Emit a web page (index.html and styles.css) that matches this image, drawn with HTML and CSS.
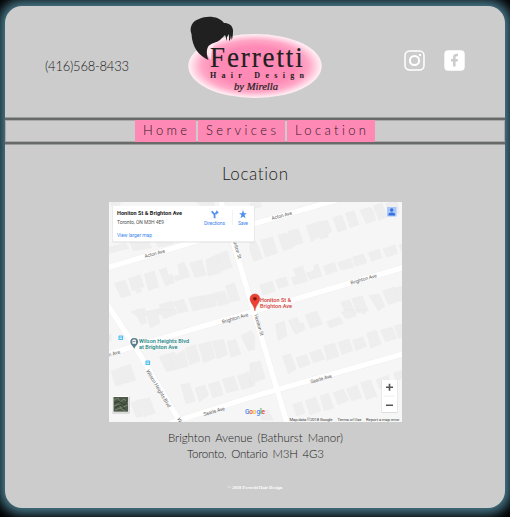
FILE: index.html
```html
<!DOCTYPE html>
<html lang="en">
<head>
<meta charset="utf-8">
<title>Ferretti Hair Design - Location</title>
<link rel="stylesheet" href="styles.css">
</head>
<body>
<div class="panel">
  <header class="header">
    <div class="phone"><svg width="86" height="22"><text x="1" y="15" textLength="84">(416)568-8433</text></svg></div>
    <svg class="logo" width="136" height="86" viewBox="187 14 136 86">
      <defs><radialGradient id="glow"><stop offset=".6" stop-color="#ff8ab5"/><stop offset=".8" stop-color="#ffa6c6"/><stop offset=".94" stop-color="#ffdce8"/><stop offset="1" stop-color="#fff1f6"/></radialGradient></defs>
      <ellipse cx="255" cy="66" rx="66.7" ry="32" fill="url(#glow)"/>
      <path fill="#ffe9f1" d="M206 53Q207 44 217 42L226 37L216 43Q211 46 211 60Z"/>
      <path fill="#202020" d="M208.500 60C206 54 206.500 48 209 45.500C213 42 218 43 222 38L225 35C226 37 226 39 227 41L227 37L229 34L229 41C230.500 40 231 37 230.800 35L231.700 40C233 37 233 33 233 30C232 25 229 23 224 23C219 16 207 15 199 19C192 21 189 28 191.500 34C192 47 199 56 208.500 60Z"/>
      <g fill="#202020">
        <text class="logo-name" transform="translate(210 66.700) scale(.9 1)" x="0" y="0" textLength="103">Ferretti</text>
        <text class="logo-sub" x="210" y="78.400" textLength="94">Hair Design</text>
        <text class="logo-by" x="234" y="89.800" textLength="44" lengthAdjust="spacingAndGlyphs">by Mirella</text>
      </g>
    </svg>
    <div class="social">
      <svg width="21" height="21" viewBox="0 0 21 21" fill="none" stroke="#fff"><rect x="1" y="1" width="19" height="19" rx="4.500" stroke-width="1.500"/><circle cx="10.500" cy="10.500" r="4.600" stroke-width="2"/><circle cx="16" cy="5" r="1.200" fill="#fff" stroke="none"/></svg>
      <svg width="21" height="21" viewBox="0 0 21 21"><rect x=".3" y=".3" width="20.400" height="20.400" rx="4" fill="#fff"/><path d="M14 5H12.500Q10.300 5 10.300 7.500V16.500M7 10.200H13.800" fill="none" stroke="#ccc" stroke-width="2.500"/></svg>
    </div>
  </header>
  <nav class="nav">
    <a class="home"><svg width="50" height="20"><text x="1" y="14" textLength="44">Home</text></svg></a>
    <a class="services"><svg width="75" height="20"><text x="0" y="14" textLength="70">Services</text></svg></a>
    <a class="location"><svg width="77" height="20"><text x="0" y="14" textLength="71">Location</text></svg></a>
  </nav>
  <main class="main">
    <h1><svg width="70" height="26"><text x="2" y="19" textLength="66">Location</text></svg></h1>
    <svg class="map" width="293" height="220" viewBox="109 202 293 220">
      <rect x="109" y="202" width="293" height="220" fill="#f6f6f6"/>
      <g fill="#eeeeee" stroke="#e9e9e9" stroke-width="1">
        <g transform="translate(105 198) scale(.33333)">
          <path d="M28 256L60 246L78 290L49 300ZM70 242L105 230L117 266L106 270L110 280L96 286L90 276L82 278ZM117 228L148 218L161 266L131 278ZM162 216L184 209L190 232L201 228L208 254L182 263ZM204 237L224 230L218 200L237 192L256 235L213 249ZM254 196L290 185L304 231L270 239ZM302 187L334 170L348 224L310 235ZM334 170L366 158L382 208L350 219Z"/>
          <path d="M92 335L119 330L124 352L103 357ZM138 339L167 330L178 350H143ZM162 320L201 309L212 340L178 350ZM205 312L236 303L250 340L220 346ZM250 301L286 293L300 330L264 340ZM286 295L326 287L336 323L302 332ZM326 286L358 278L374 315L341 324ZM362 264L388 255L405 306L375 313Z"/>
          <path d="M12 148L60 134L72 151L14 165ZM75 133L132 132L140 149L84 158ZM152 133L204 133V139L160 147ZM16 12H48L42 24H18ZM275 12L325 12L330 22L290 25Z"/>
        </g>
        <g transform="translate(250 198) scale(.33333)">
          <path d="M0 132L17 129L38 181L12 190L0 159ZM31 127L68 117L83 165L47 177ZM84 112L108 104L117 115L115 99L145 92L160 134L130 144L125 151L99 158ZM168 83L195 74L202 80L200 73L232 67L246 101L235 106V117L210 124L208 115L184 131ZM248 59L276 51L291 94L264 102ZM286 45L312 39L327 80L300 89ZM330 37L361 27L370 40L378 66L349 77ZM370 24L396 15L412 57L387 67ZM406 16L442 10L448 46L420 58Z"/>
          <path d="M28 261L66 249L76 280L39 292ZM76 246L108 237L116 262L86 272ZM124 240L138 235L130 214L158 203L173 250L133 260ZM168 225L194 217L191 203L204 198L216 235L180 245ZM220 205L252 193L263 219L229 231ZM262 194L302 180L312 207L273 217ZM307 178L340 167L350 194L316 205ZM355 164L387 153L397 179L365 190ZM399 152L435 140L443 166L410 178ZM447 140L461 136V161L454 160Z"/>
          <path d="M272 313L298 305L318 346H286ZM305 302L337 293L355 338L320 345ZM356 292L388 288L405 325L385 338ZM397 279L432 267L448 309L415 320ZM432 270L461 264V307L449 309ZM0 15L30 12L35 25L5 35Z"/>
        </g>
        <g transform="translate(105 310) scale(.33333)">
          <path d="M77 5L95 18L110 45L126 37L113 0ZM122 4L155 0L166 40L136 55ZM158 0L211 0L217 11L178 26ZM162 140L190 130L206 180L184 185ZM190 131L208 126L214 135L237 120L250 169L206 180ZM240 115L271 104L286 153L254 164ZM280 104L316 94L331 145L296 158ZM320 94L356 88L368 133L337 148ZM366 94L391 88L408 132L378 142ZM408 77L438 61L449 75V118L430 124Z"/>
          <path d="M227 225L252 218L272 273L243 282ZM270 234L299 224L311 255L283 277ZM310 222L342 214L355 254L323 264ZM352 208L387 198L401 240L365 249ZM397 199L430 186L440 230L410 240ZM434 185H449V228L440 230ZM18 184L50 171L63 218L32 229ZM52 170L76 163L92 210L64 219ZM78 278L106 268L112 320H92ZM106 269L134 264L151 309L117 321ZM10 75L18 72V92L10 94Z"/>
        </g>
        <g transform="translate(250 310) scale(.33333)">
          <path d="M76 43L103 33L111 78L85 92ZM115 31L140 22L150 40L160 38L165 59L138 73L128 59ZM165 15L200 3L218 42L181 55ZM229 35L268 20L280 40L240 54ZM274 7L291 0H310L318 18L288 27ZM320 0H350L342 13Z"/>
          <path d="M97 139L122 131L139 178L115 191ZM137 144L169 133L181 163L150 174ZM178 128L211 118L225 147L191 159ZM221 108L254 99L267 139L232 151ZM264 97L296 87L309 122L276 134ZM307 91L339 80L350 109L318 122ZM350 70L378 60L394 102L362 115ZM391 60L426 52L441 84L407 96ZM432 48L461 40V79L446 86Z"/>
          <path d="M128 283L155 275L165 309L140 318ZM165 272L197 261L213 303L180 315ZM210 258L235 249L252 295L222 303ZM250 248L280 236L297 271L264 285ZM289 237L320 225L336 263L304 273ZM332 218L362 209L381 258L349 269ZM378 209L415 196L425 230L387 235ZM0 160L31 153L46 205L0 222ZM0 85L12 116L0 120ZM430 188L461 180V204L438 212ZM30 305L54 300L70 330H34Z"/>
        </g>
      </g>
      <path fill="none" stroke="#f0f0f0" stroke-width="6.300" d="M105 268.500L250 225L340 199M105 355L405 267M170 423L250 397.500L405 353.500M220 198L287 423M105 301L134 345L182 425"/>
      <path fill="none" stroke="#fff" stroke-width="5.300" d="M105 268.500L250 225L340 199M105 355L405 267M170 423L250 397.500L405 353.500M220 198L287 423M105 301L134 345L182 425"/>
      <g class="road">
        <text transform="translate(145 258) rotate(-15)" textLength="21">Acton Ave</text>
        <text transform="translate(272 220) rotate(-15)" textLength="21">Acton Ave</text>
        <text transform="translate(351 284.500) rotate(-16)" textLength="27">Brighton Ave</text>
        <text transform="translate(222.500 323.500) rotate(-16)" textLength="27">Brighton Ave</text>
        <text transform="translate(204 416) rotate(-16)" textLength="22">Searle Ave</text>
        <text transform="translate(311 383.500) rotate(-16)" textLength="22">Searle Ave</text>
        <text transform="translate(109 356.500) rotate(-16)" textLength="12">n Ave</text>
        <text transform="translate(231.500 237) rotate(73)" textLength="23">Honiton St</text>
        <text transform="translate(254 315) rotate(73)" textLength="22">Honiton St</text>
        <text transform="translate(146 371) rotate(59)" textLength="43">Wilson Heights Blvd</text>
        <text transform="translate(177 419) rotate(59)">W</text>
      </g>
      <g fill="#50bdec"><rect x="118.500" y="335.500" width="4.600" height="4.600" rx=".7"/><rect x="145.500" y="360.500" width="4.600" height="4.600" rx=".7"/></g>
      <path d="M119.500 337H122M119.500 338.500H122M146.500 362H149M146.500 363.500H149" stroke="#fff" stroke-width=".7"/>
      <path fill="#607d8b" d="M134.200 349C133.500 346 130.300 345 130.300 341.800A3.900 3.900 0 0 1 138.100 341.800C138.100 345 134.900 346 134.200 349Z"/>
      <path fill="#fff" d="M132.400 340.500Q132.400 339.500 134.200 339.500T136 340.500V343.800H132.400Z"/><path d="M133 341.600H135.400" stroke="#607d8b" stroke-width=".9"/>
      <g class="place teal"><text x="139" y="343.300" textLength="50">Wilson Heights Blvd</text><text x="139" y="349.200" textLength="38.500">at Brighton Ave</text></g>
      <path fill="#ea4335" stroke="#cf3529" stroke-width=".4" d="M254.900 311C254.200 305 250 303 250 298.800A4.900 4.900 0 0 1 259.800 298.800C259.800 303 255.600 305 254.900 311Z"/><circle cx="254.900" cy="298.800" r="1.800" fill="#811411"/>
      <g class="place red"><text x="260" y="302.300" textLength="31">Honiton St &amp;</text><text x="260" y="308" textLength="32">Brighton Ave</text></g>
      <rect x="112.500" y="206.500" width="142" height="36" fill="#d8d8d8" opacity=".8"/><rect x="113" y="206" width="141" height="35.500" fill="#fff"/>
      <g class="card"><text class="title" x="117" y="215.200" textLength="65">Honiton St &amp; Brighton Ave</text><text x="117" y="224" fill="#555" textLength="47">Toronto, ON M3H 4E9</text>
      <g fill="#3d87ed"><text x="117" y="237.300" textLength="35">View larger map</text><text x="204" y="225.300" textLength="21">Directions</text><text x="238" y="225.300" textLength="10">Save</text></g></g>
      <path d="M232.500 210V225" stroke="#eee" stroke-width=".7"/>
      <path fill="#5090ed" d="M243 209.800L244 213.200H247L244.600 215.100L245.500 218.300L243 216.400L240.500 218.300L241.400 215.100L239 213.200H242ZM216.200 210.200L218.800 212.300L216.200 214.700V213.300L215.500 214.200V218.300H213.700V215L211 211.800L212.400 210.800L214.600 213.200L216.200 211.700Z"/>
      <rect x="387" y="207" width="9.500" height="9.500" fill="#a8c7fa"/><g fill="#3870dc"><circle cx="391.700" cy="210" r="1.700"/><path d="M388.500 215.500V214.200Q388.500 212.600 391.700 212.600T395 214.200V215.500Z"/></g>
      <rect x="112.500" y="396.500" width="17" height="17" fill="#bbb"/><rect x="112.500" y="396" width="16.500" height="16.500" fill="#fff"/><rect x="113.500" y="397" width="14.700" height="14.700" fill="#4d5949"/>
      <path d="M114 400L118 398L120 402L124 399L128 403M114 406L119 404L121 408L128 405M115 410L120 408L125 411" stroke="#79816b" fill="none"/><path d="M114 403L119 401L124 405L127 401M115 408L120 405L125 409" stroke="#303f34" fill="none"/>
      <rect x="381.500" y="380" width="16" height="33" fill="#ddd"/><rect x="382" y="380" width="15" height="32" fill="#fff"/><path d="M386 387.300H393M389.500 383.800V390.800M386 405.300H393" stroke="#555" stroke-width="1.600"/><path d="M384 396.200H395" stroke="#e6e6e6" stroke-width=".6"/>
      <text class="google" x="245" y="413.800" textLength="20"><tspan fill="#4285f4">G</tspan><tspan fill="#ea4335">o</tspan><tspan fill="#fbbc05">o</tspan><tspan fill="#4285f4">g</tspan><tspan fill="#34a853">l</tspan><tspan fill="#ea4335">e</tspan></text>
      <g class="credits"><text x="289.500" y="420.500" textLength="43">Map data ©2018 Google</text><text x="337.500" y="420.500" textLength="24">Terms of Use</text><text x="366" y="420.500" textLength="33.500">Report a map error</text></g>
    </svg>
    <address><svg width="180" height="34"><text x="3" y="13" textLength="175">Brighton Avenue (Bathurst Manor)</text><text x="22" y="29" textLength="137">Toronto, Ontario M3H 4G3</text></svg></address>
  </main>
  <footer>© 2018 Ferretti Hair Design</footer>
</div>
</body>
</html>
```
FILE: styles.css
```css
* { box-sizing: border-box; }
html { background: #000; }
body { margin: 0; padding: 6px 5px 9px; height: 517px; overflow: hidden; font-family: Lato, sans-serif; font-weight: 300; font-variant-ligatures: none; background: #000; }
svg { display: block; }
.panel { height: 502px; border-radius: 17px; background: #ccc; box-shadow: 0 0 12px 6px #49798b; }
.header { height: 112px; display: grid; grid-template-columns: 182px 136px 1fr; }
.phone { padding: 50px 0 0 39px; fill: #222; font-size: 13px; }
.logo { margin-top: 8px; }
.logo-name { font: 30px "Liberation Serif", serif; stroke: #202020; stroke-width: .2px; }
.logo-sub { font: bold 8px "Liberation Serif", serif; }
.logo-by { font: italic 10.5px "Liberation Serif", serif; stroke: #202020; stroke-width: .2px; }
.social { display: flex; gap: 19px; padding: 44px 0 0 81px; }
.nav { height: 26px; display: flex; gap: 2px; padding: 0 0 0 130px; border-top: 2px solid #686a69; border-bottom: 2px solid #686a69; box-shadow: 0 0 0 1px #999d9b, inset 0 0 0 1px #aaa; clip-path: inset(-1px 0); }
.nav a { display: block; height: 22px; background: #ff89b5; fill: #301824; font-size: 13px; font-weight: 300; padding-top: 1px; }
.home { width: 61px; padding-left: 7px; }
.services { width: 87px; padding-left: 8px; }
.location { width: 88px; padding-left: 8px; }
.main { display: flex; flex-direction: column; align-items: center; }
h1 { margin: 17px 0 15px; height: 26px; font-size: 17px; font-weight: 300; fill: #222; }
.map { overflow: hidden; }
address { margin-top: 7px; font-style: normal; font-size: 11.5px; fill: #222; word-spacing: 2px; }
.road { font: 5px Roboto, sans-serif; fill: #696969; }
.place { font: 500 5.5px Roboto, sans-serif; }
.teal { fill: #168584; }
.red { fill: #d53b34; }
.card { font: 5px Roboto, sans-serif; }
.title { font-size: 5.5px; font-weight: 700; fill: #222; }
.google { font: 500 6.5px Roboto, sans-serif; }
.credits { font: 4.2px Roboto, sans-serif; fill: #444; }
footer { margin-top: 20px; text-align: center; color: #fff; font: bold 4.6px/10px "Liberation Serif", serif; }
```
